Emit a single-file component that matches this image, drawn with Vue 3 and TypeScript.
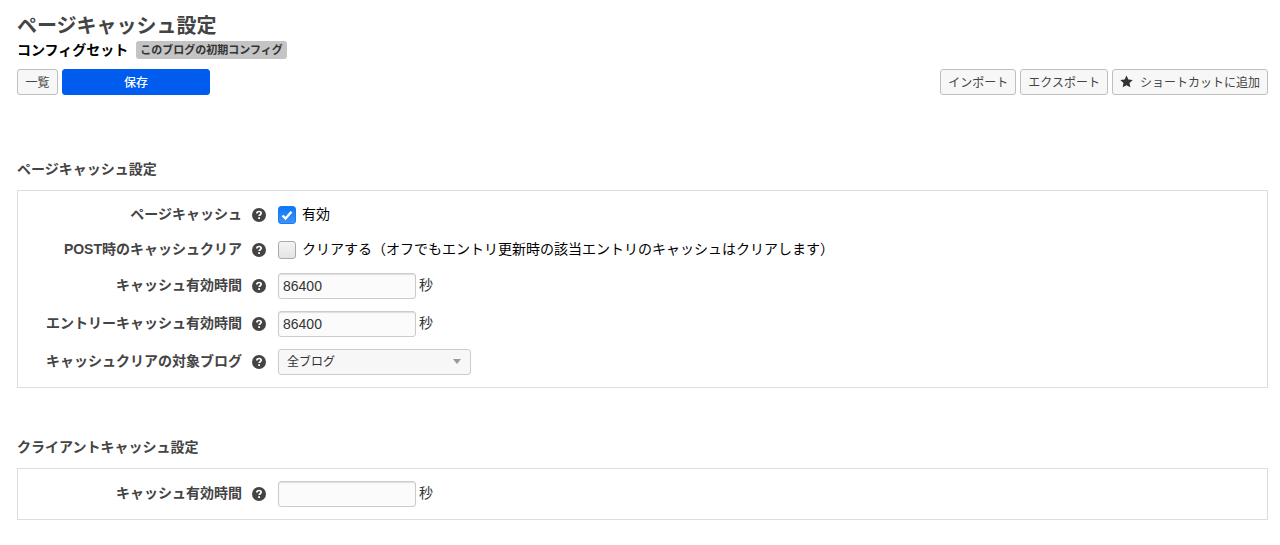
<script setup lang="ts">
import { reactive } from 'vue'

interface Field {
  id: string
  label: string
  type: 'check' | 'number' | 'select'
  text: string
}

interface Section {
  title: string
  fields: Field[]
}

const sections: Section[] = [
  {
    title: 'ページキャッシュ設定',
    fields: [
      { id: 'cache', label: 'ページキャッシュ', type: 'check', text: '有効' },
      {
        id: 'clear',
        label: 'POST時のキャッシュクリア',
        type: 'check',
        text: 'クリアする（オフでもエントリ更新時の該当エントリのキャッシュはクリアします）',
      },
      { id: 'expire', label: 'キャッシュ有効時間', type: 'number', text: '秒' },
      { id: 'entryExpire', label: 'エントリーキャッシュ有効時間', type: 'number', text: '秒' },
      { id: 'target', label: 'キャッシュクリアの対象ブログ', type: 'select', text: '全ブログ' },
    ],
  },
  {
    title: 'クライアントキャッシュ設定',
    fields: [{ id: 'clientExpire', label: 'キャッシュ有効時間', type: 'number', text: '秒' }],
  },
]

const checks = reactive<Record<string, boolean>>({ cache: true, clear: false })
const values = reactive<Record<string, string>>({
  expire: '86400',
  entryExpire: '86400',
  clientExpire: '',
})
</script>

<template>
  <main class="page">
    <header>
      <h1>ページキャッシュ設定</h1>
      <p class="config">
        <span>コンフィグセット</span>
        <span class="badge">このブログの初期コンフィグ</span>
      </p>
      <div class="toolbar">
        <button type="button" class="btn">一覧</button>
        <button type="submit" class="btn primary">保存</button>
        <span class="spacer"></span>
        <button type="button" class="btn">インポート</button>
        <button type="button" class="btn">エクスポート</button>
        <button type="button" class="btn">
          <svg class="star" viewBox="0 0 24 24" aria-hidden="true">
            <path d="M12 0.8l3.5 7.3 8 1.1-5.9 5.6 1.5 8L12 18.9l-7.1 3.9 1.5-8L.5 9.2l8-1.1z" />
          </svg>
          ショートカットに追加
        </button>
      </div>
    </header>

    <section v-for="section in sections" :key="section.title">
      <h2>{{ section.title }}</h2>
      <div class="panel">
        <div
          v-for="field in section.fields"
          :key="field.id"
          class="row"
          :class="{ short: field.type === 'check' }"
        >
          <label class="name" :for="field.id">{{ field.label }}</label>
          <svg class="help" viewBox="0 0 14 14" aria-hidden="true">
            <circle cx="7" cy="7" r="7" />
            <path d="M4.9 5.5C4.9 4.2 5.8 3.5 7 3.5s2.2.7 2.2 1.8c0 1.4-2 1.4-2 2.8" />
            <rect x="6.2" y="9.2" width="1.8" height="1.8" />
          </svg>
          <template v-if="field.type === 'check'">
            <input :id="field.id" v-model="checks[field.id]" type="checkbox" class="check" />
            <label class="text" :for="field.id">{{ field.text }}</label>
          </template>
          <template v-else-if="field.type === 'number'">
            <input :id="field.id" v-model="values[field.id]" type="text" class="input" />
            <span class="unit">{{ field.text }}</span>
          </template>
          <div v-else class="select">
            <select :id="field.id">
              <option>{{ field.text }}</option>
            </select>
            <svg class="arrow" viewBox="0 0 8 5" aria-hidden="true"><path d="M0 0h8L4 5z" /></svg>
          </div>
        </div>
      </div>
    </section>
  </main>
</template>

<style>
body {
  margin: 0;
  background: #fff;
}
</style>

<style scoped>
.page {
  padding: 13px 12px 24px 17px;
  color: #444;
  font: 14px/20px "Liberation Sans", "Noto Sans CJK JP", sans-serif;
}
button,
input,
select {
  box-sizing: border-box;
  margin: 0;
  font-family: inherit;
}
h1 {
  margin: 0;
  font-size: 20px;
  line-height: 26px;
  font-weight: bold;
}
.config {
  display: flex;
  align-items: center;
  gap: 8px;
  margin: 0 0 8px;
  color: #000;
  font-weight: bold;
  line-height: 22px;
}
.badge {
  padding: 0 4px;
  border-radius: 3px;
  background: #c4c4c4;
  color: #333;
  font-size: 11px;
  line-height: 18px;
}
.toolbar {
  display: flex;
  gap: 4px;
}
.spacer {
  flex: 1;
}
.btn {
  display: flex;
  align-items: center;
  justify-content: center;
  min-width: 41px;
  height: 26px;
  padding: 0 7px 2px;
  border: 1px solid #bfbfbf;
  border-radius: 3px;
  background: #f7f7f7;
  color: #444;
  font-size: 12px;
  white-space: nowrap;
}
.primary {
  width: 148px;
  border-color: #005cee;
  background: #005cee;
  color: #fff;
  font-weight: 500;
}
.star {
  width: 13px;
  height: 13px;
  margin-right: 7px;
  fill: #333;
}
section {
  margin-top: 49px;
}
header + section {
  margin-top: 64px;
}
h2 {
  margin: 0 0 11px;
  font-size: 14px;
  line-height: 20px;
  font-weight: bold;
}
.panel {
  display: flex;
  flex-direction: column;
  gap: 12px;
  padding: 12px;
  border: 1px solid #ddd;
}
.row {
  display: flex;
  align-items: center;
  height: 26px;
}
.short {
  height: 23px;
}
.name,
.text,
.unit {
  padding-bottom: 2px;
}
.name {
  width: 212px;
  margin-right: 10px;
  text-align: right;
  font-weight: bold;
  white-space: nowrap;
}
.help {
  flex: none;
  width: 14px;
  height: 14px;
  margin-right: 12px;
  fill: #444;
}
.help path {
  fill: none;
  stroke: #fff;
  stroke-width: 1.7;
}
.help rect {
  fill: #fff;
}
.check {
  flex: none;
  width: 18px;
  height: 18px;
  margin-right: 6px;
  border: 1px solid #aaa;
  border-radius: 3px;
  background: linear-gradient(#f4f4f4, #e4e4e4);
  appearance: none;
}
.check:checked {
  border-color: #1a7af0;
  background:
    url("data:image/svg+xml,%3Csvg xmlns='http://www.w3.org/2000/svg' viewBox='0 0 16 16'%3E%3Cpath d='M3.5 8.5l3 3L12.5 4.8' fill='none' stroke='white' stroke-width='2.4'/%3E%3C/svg%3E"),
    linear-gradient(#0c78f8, #3d92fb);
}
.text {
  color: #000;
}
.input {
  width: 138px;
  height: 26px;
  margin-right: 3px;
  padding: 0 4px;
  border: 1px solid #ccc;
  border-radius: 3px;
  background: #fbfbfb;
  box-shadow: inset 0 1px 1px #ddd;
  color: #333;
  font-size: 14px;
}
.unit {
  color: #333;
}
.select {
  position: relative;
  width: 193px;
}
select {
  display: block;
  width: 100%;
  height: 26px;
  padding: 0 24px 0 8px;
  border: 1px solid #ccc;
  border-radius: 3px;
  background: #f7f7f7;
  color: #333;
  font-size: 12px;
  appearance: none;
}
.arrow {
  position: absolute;
  top: 10px;
  right: 10px;
  width: 8px;
  height: 5px;
  fill: #999;
  pointer-events: none;
}
</style>
